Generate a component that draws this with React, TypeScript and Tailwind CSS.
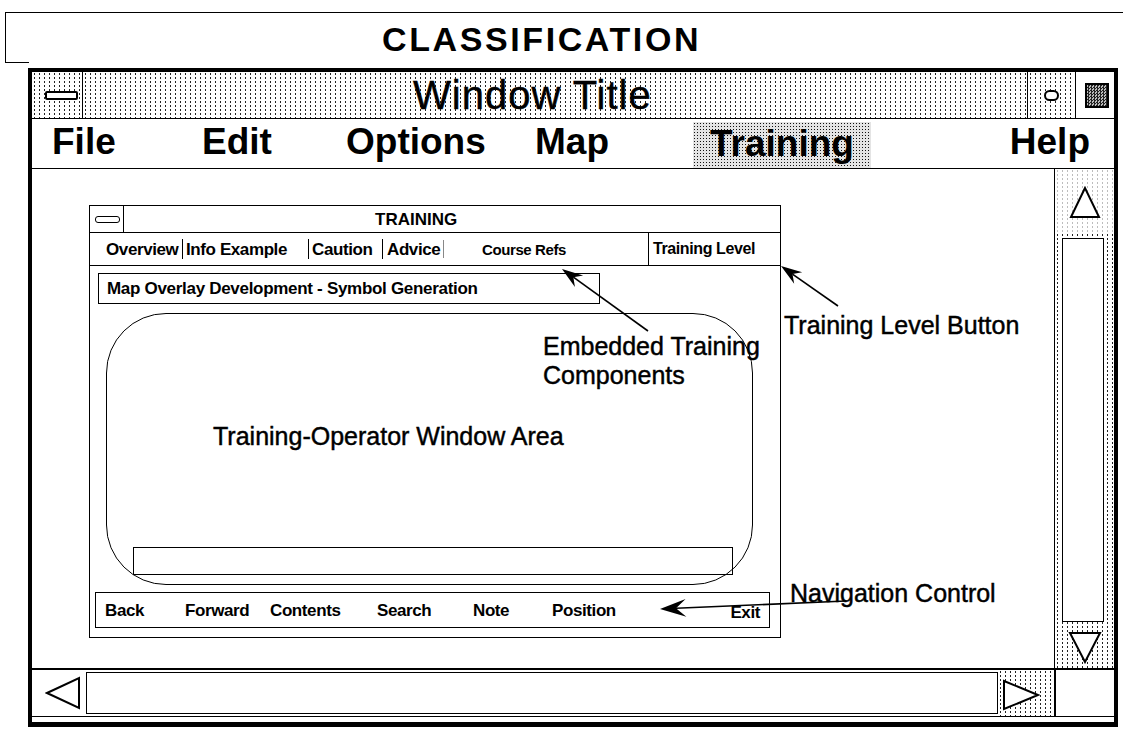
import React from "react";

const FONT = "font-['Liberation_Sans',Arial,Helvetica,sans-serif]";
const STIPPLE =
  "bg-[radial-gradient(circle,#222_0.8px,transparent_1.1px)] bg-[length:5px_4px]";
const DENSE =
  "bg-[#e4e4e4] bg-[radial-gradient(circle,#111_0.75px,transparent_1px)] bg-[length:3px_3px]";
const HEAVY = "[-webkit-text-stroke:0.45px_#000]";

type Pt = { x1: number; y1: number; x2: number; y2: number; L?: number; W?: number; N?: number };

function Arrow({ x1, y1, x2, y2, L = 21, W = 7, N = 14 }: Pt) {
  const dx = x2 - x1;
  const dy = y2 - y1;
  const len = Math.hypot(dx, dy);
  const ux = dx / len;
  const uy = dy / len;
  const px = -uy;
  const py = ux;
  const bx = x2 - ux * L;
  const by = y2 - uy * L;
  const nx = x2 - ux * N;
  const ny = y2 - uy * N;
  const pts = `${x2},${y2} ${bx + px * W},${by + py * W} ${nx},${ny} ${bx - px * W},${by - py * W}`;
  return (
    <g>
      <line x1={x1} y1={y1} x2={nx} y2={ny} stroke="#000" strokeWidth={1.6} />
      <polygon points={pts} fill="#000" />
    </g>
  );
}

function Sep() {
  return <div className="h-[20px] w-px self-center bg-black" />;
}

function InnerWindow() {
  return (
    <div className="flex h-[433px] w-[692px] flex-col border border-black bg-white">
      {/* title row */}
      <div className="flex h-[27px] border-b border-black">
        <div className="flex w-[34px] items-center border-r border-black pl-[5px]">
          <div className="h-[7px] w-[25px] rounded-[3px] border-[1.5px] border-black" />
        </div>
        <div className="flex flex-1 items-center pl-[251px] text-[17px] font-bold leading-none">
          TRAINING
        </div>
      </div>
      {/* tab row */}
      <div className="flex h-[33px] border-b border-black text-[17px] font-bold leading-none tracking-[-0.4px]">
        <div className="flex w-[92px] items-center pl-[16px]">Overview</div>
        <Sep />
        <div className="flex w-[125px] items-center pl-[3px]">Info Example</div>
        <Sep />
        <div className="flex w-[73px] items-center pl-[3px]">Caution</div>
        <Sep />
        <div className="flex w-[60px] items-center pl-[4px]">Advice</div>
        <div className="h-[18px] w-px self-center bg-[#888]" />
        <div className="flex w-[204px] items-center pl-[38px] text-[15px]">Course Refs</div>
        <div className="flex flex-1 items-center border-l border-black pl-[4px] text-[16px]">
          Training Level
        </div>
      </div>
      {/* body */}
      <div className="ml-[8px] mt-[7px] flex h-[31px] w-[502px] items-center border border-black pl-[8px] text-[17px] font-bold leading-none tracking-[-0.3px]">
        Map Overlay Development - Symbol Generation
      </div>
      <div className="ml-[16px] mt-[9px] flex h-[272px] w-[647px] flex-col rounded-[60px] border-[1.5px] border-black">
        <div className={`pl-[106px] pt-[110px] text-[25px] leading-none ${HEAVY}`}>
          Training-Operator Window Area
        </div>
        <div className="mb-[9px] ml-[26px] mt-auto h-[28px] w-[600px] border border-black" />
      </div>
      <div className="ml-[5px] mt-[7px] flex h-[36px] w-[675px] items-center border border-black pl-[9px] text-[17px] font-bold leading-none tracking-[-0.4px]">
        <div className="w-[80px]">Back</div>
        <div className="w-[85px]">Forward</div>
        <div className="w-[107px]">Contents</div>
        <div className="w-[96px]">Search</div>
        <div className="w-[79px]">Note</div>
        <div>Position</div>
        <div className="ml-auto pr-[9px] pt-[4px]">Exit</div>
      </div>
    </div>
  );
}

export default function App() {
  return (
    <div className={`relative h-[732px] w-[1123px] overflow-hidden bg-white text-black ${FONT}`}>
      {/* classification banner */}
      <div className="ml-[5px] mt-[12px] flex h-[51px] w-[1118px] flex-col border-l border-t border-black">
        <div className="flex h-[49px] items-center pl-[376px] pt-[3px] text-[34px] font-bold leading-none tracking-[2.6px]">
          CLASSIFICATION
        </div>
        <div className="h-px w-[23px] bg-black" />
      </div>

      {/* main window */}
      <div className="ml-[28px] mt-[5px] flex h-[659px] w-[1090px] flex-col border-[4px] border-b-[5px] border-black">
        {/* title bar */}
        <div className="flex h-[47px] border-b border-black">
          <div className={`flex w-[51px] items-center border-r border-black pl-[13px] ${STIPPLE}`}>
            <div className="h-[9px] w-[33px] rounded-[2px] border-2 border-black bg-white" />
          </div>
          <div className={`flex flex-1 items-center pl-[330px] ${STIPPLE}`}>
            <span className={`text-[40px] leading-none tracking-[1px] ${HEAVY}`}>Window Title</span>
          </div>
          <div className={`flex w-[48px] items-center justify-center border-l border-black ${STIPPLE}`}>
            <div className="h-[11px] w-[15px] rounded-full border-2 border-black bg-white" />
          </div>
          <div className="flex w-[39px] items-center justify-center border-l border-black pl-[3px]">
            <div className="h-[25px] w-[24px] border-2 border-black bg-[conic-gradient(#222_25%,#bbb_0_50%,#222_0_75%,#bbb_0)] bg-[length:3px_3px]" />
          </div>
        </div>

        {/* menu bar */}
        <div className="flex h-[50px] items-stretch border-b border-black pl-[20px] text-[37px] font-bold leading-none">
          <div className="flex w-[150px] items-center pb-[4px]">File</div>
          <div className="flex w-[144px] items-center pb-[4px]">Edit</div>
          <div className="flex w-[189px] items-center pb-[4px]">Options</div>
          <div className="flex w-[158px] items-center pb-[4px]">Map</div>
          <div className={`mt-[3px] flex w-[178px] items-center justify-center pb-[4px] ${DENSE}`}>
            Training
          </div>
          <div className="ml-auto flex items-center pb-[4px] pr-[24px]">Help</div>
        </div>

        {/* work area + vertical scrollbar */}
        <div className="flex h-[499px]">
          <div className="w-[1022px] pl-[57px] pt-[36px]">
            <InnerWindow />
          </div>
          <div className={`flex w-[60px] flex-col border-l border-black ${STIPPLE}`}>
            <div className="flex h-[64px] items-start justify-center bg-white/70 pl-[1px] pt-[17px]">
              <svg width="32" height="33" viewBox="0 0 32 33">
                <polygon points="16,2 2,31 30,31" fill="white" stroke="#000" strokeWidth="2" />
              </svg>
            </div>
            <div className="ml-[7px] mt-[5px] h-[384px] w-[42px] border border-black bg-white" />
            <div className="flex flex-1 items-start justify-center pl-[1px] pt-[9px]">
              <svg width="34" height="33" viewBox="0 0 34 33">
                <polygon points="2,2 32,2 17,31" fill="white" stroke="#000" strokeWidth="2" />
              </svg>
            </div>
          </div>
        </div>

        {/* horizontal scrollbar */}
        <div className="flex h-[49px] border-b border-t-2 border-black">
          <div className="flex w-[54px] items-center pl-[13px]">
            <svg width="36" height="34" viewBox="0 0 36 34">
              <polygon points="2,17 34,2 34,32" fill="white" stroke="#000" strokeWidth="2" />
            </svg>
          </div>
          <div className="my-[2px] w-[912px] border border-black bg-white" />
          <div className={`flex w-[56px] items-center pl-[4px] pt-[4px] ${STIPPLE}`}>
            <svg width="38" height="32" viewBox="0 0 38 32">
              <polygon points="2,2 36,16 2,30" fill="white" stroke="#000" strokeWidth="2" />
            </svg>
          </div>
          <div className="flex-1 border-l-2 border-black bg-white" />
        </div>
      </div>

      {/* annotation callouts */}
      <div className={`absolute left-[784px] top-[313px] text-[25px] leading-none ${HEAVY}`}>
        Training Level Button
      </div>
      <div className={`absolute left-[543px] top-[332px] text-[25px] leading-[29px] ${HEAVY}`}>
        Embedded Training
        <br />
        Components
      </div>
      <div className={`absolute left-[790px] top-[581px] text-[25px] leading-none ${HEAVY}`}>
        Navigation Control
      </div>
      <svg className="pointer-events-none absolute left-0 top-0" width="1123" height="732">
        <Arrow x1={838} y1={306} x2={781} y2={266} />
        <Arrow x1={648} y1={331} x2={562} y2={269} />
        <Arrow x1={846} y1={601} x2={660} y2={609} L={26} W={9} N={16} />
      </svg>
    </div>
  );
}
